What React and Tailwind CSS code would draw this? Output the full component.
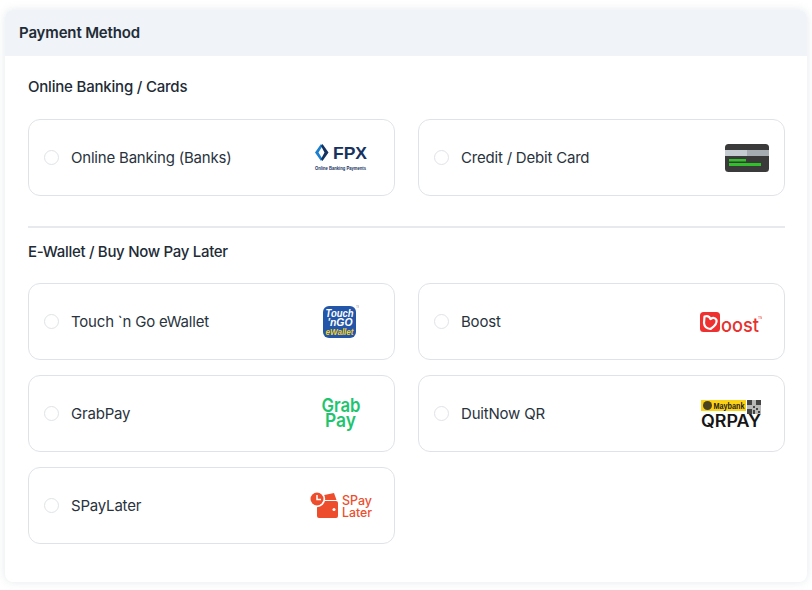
const FpxLogo = () => (
  <svg width="56" height="32" viewBox="0 0 56 32">
    <path d="M8 2 L2 10.5 L8 19 L9.5 17 L5.5 10.5 L9.5 4 Z" fill="#1b7fd0" />
    <path d="M9.5 2 L15.5 10.5 L9.5 19 L8 17 L11.5 10.5 L8 4 Z" fill="#16325f" />
    <text x="20" y="17" fontFamily="Liberation Sans, sans-serif" fontWeight="700" fontSize="17" fill="#16325f" textLength="34" lengthAdjust="spacingAndGlyphs">FPX</text>
    <text x="2" y="28" fontFamily="Liberation Sans, sans-serif" fontWeight="700" fontSize="5" fill="#16325f" textLength="51" lengthAdjust="spacingAndGlyphs">Online Banking Payments</text>
  </svg>
);

const CardLogo = () => (
  <svg width="46" height="32" viewBox="0 0 46 32" className="ml-[32px] shrink-0">
    <rect x="1" y="2" width="44" height="28" rx="3.5" fill="#3a3a3a" />
    <rect x="1" y="8" width="22" height="6" fill="#c4ccd2" />
    <rect x="23" y="8" width="22" height="6" fill="#a5adb3" />
    <rect x="5" y="17" width="17" height="2.5" fill="#2fc02a" />
    <rect x="5" y="21" width="32" height="3" fill="#2fc02a" />
  </svg>
);

const TngLogo = () => (
  <svg width="36" height="36" viewBox="0 0 36 36">
    <rect x="0" y="2" width="33" height="32" rx="6" fill="#2355a8" />
    <text x="16.5" y="13" textAnchor="middle" fontFamily="Liberation Sans, sans-serif" fontStyle="italic" fontWeight="700" fontSize="11" fill="#fff" textLength="28" lengthAdjust="spacingAndGlyphs">Touch</text>
    <text x="17" y="21.5" textAnchor="middle" fontFamily="Liberation Sans, sans-serif" fontStyle="italic" fontWeight="700" fontSize="10" fill="#fff" textLength="25" lengthAdjust="spacingAndGlyphs">'nGO</text>
    <text x="16.5" y="31" textAnchor="middle" fontFamily="Liberation Sans, sans-serif" fontStyle="italic" fontWeight="700" fontSize="9.5" fill="#f5d327" textLength="28" lengthAdjust="spacingAndGlyphs">eWallet</text>
    <text x="33" y="4" fontFamily="Liberation Sans, sans-serif" fontSize="3" fill="#9aa4b0">TM</text>
  </svg>
);

const BoostLogo = () => (
  <svg width="62" height="26" viewBox="0 0 62 26">
    <rect x="0" y="3" width="20" height="20" rx="3.5" fill="#ee3030" />
    <path d="M4.5 7.5 Q9 6 10.5 10 Q14.5 7.5 16.5 11 Q17.5 15.5 10.5 20 Q4.5 19.5 4 14 Z" fill="#ee3030" stroke="#fff" strokeWidth="2.2" strokeLinejoin="round" />
    <text x="21" y="22.5" fontFamily="Inter, sans-serif" fontSize="20" fontWeight="500" fill="#e8302e" textLength="38" lengthAdjust="spacingAndGlyphs">oost</text>
    <text x="58" y="10" fontFamily="Liberation Sans, sans-serif" fontSize="3.5" fill="#e8302e">TM</text>
  </svg>
);

const GrabLogo = () => (
  <svg width="42" height="36" viewBox="0 0 42 36">
    <text x="1.5" y="16" fontFamily="Inter, sans-serif" fontWeight="600" fontSize="19" fill="#1fc46f" textLength="39" lengthAdjust="spacingAndGlyphs">Grab</text>
    <text x="5" y="30.5" fontFamily="Inter, sans-serif" fontWeight="600" fontSize="19" fill="#1fc46f" textLength="31" lengthAdjust="spacingAndGlyphs">Pay</text>
  </svg>
);

const QrPayLogo = () => (
  <svg width="60" height="32" viewBox="0 0 60 32">
    <rect x="0" y="2" width="45" height="11" fill="#fbd116" />
    <circle cx="6.5" cy="7.5" r="4.5" fill="#4b4220" />
    <text x="12.5" y="11" fontFamily="Liberation Sans, sans-serif" fontWeight="700" fontSize="9.5" fill="#1b1b1b" textLength="31" lengthAdjust="spacingAndGlyphs">Maybank</text>
    <rect x="46" y="2" width="14" height="14" fill="#b8b8b8" />
    <path d="M46 2h5v5h-5z M55 2h5v5h-5z M46 11h5v5h-5z M52 8h2v2h-2z M55 10h2v2h-2z M52 12h2v4h-2z M57 13h2v2h-2z" fill="#444" />
    <text x="0" y="29" fontFamily="Inter, sans-serif" fontWeight="600" fontSize="17" fill="#151515" textLength="60" lengthAdjust="spacingAndGlyphs">QRPAY</text>
  </svg>
);

const SpayLaterLogo = () => (
  <svg width="64" height="32" viewBox="0 0 64 32">
    <path d="M13 5.5 L25 3 L27.5 10 H13 Z" fill="#ee4d2d" />
    <rect x="8" y="11" width="21" height="17" rx="2" fill="#ee4d2d" />
    <circle cx="8" cy="9" r="8.2" fill="#fff" />
    <circle cx="8" cy="9" r="6.5" fill="#ee4d2d" />
    <path d="M8 5 V9.5 H12" fill="none" stroke="#fff" strokeWidth="1.5" />
    <circle cx="25" cy="19.5" r="1.5" fill="#fff" />
    <text x="33" y="15" fontFamily="Inter, sans-serif" fontWeight="500" fontSize="12.5" fill="#ee4d2d" textLength="30" lengthAdjust="spacingAndGlyphs">SPay</text>
    <text x="33" y="27" fontFamily="Inter, sans-serif" fontWeight="500" fontSize="12.5" fill="#ee4d2d" textLength="30" lengthAdjust="spacingAndGlyphs">Later</text>
  </svg>
);

const Option = ({ label, logo }) => {
  return (
    <label className="flex h-[77px] items-center rounded-xl border border-[#dfe3e8] bg-white pr-[21px] pl-[15px]">
      <span className="h-[15px] w-[15px] shrink-0 rounded-full border border-[#dfe3e8]" />
      <span className="ml-[12px] flex-1 pt-[1px] text-[15px] tracking-[-0.2px] text-[#29333d]">{label}</span>
      <span className="flex w-[64px] justify-center">{logo}</span>
    </label>
  );
};

export default function App() {
  return (
    <div className="h-[590px] bg-white px-[5px] pt-[10px] font-['Inter',sans-serif]">
      <div className="h-[572px] overflow-hidden rounded-lg bg-white shadow-[0_0_8px_rgba(145,158,171,0.24)]">
        <div className="flex h-[46px] items-center bg-[#f0f3f7] px-[14px] text-[15px] font-semibold tracking-[-0.15px] text-[#212b36]">
          Payment Method
        </div>
        <div className="pr-[22px] pl-[23px]">
          {/* online banking section */}
          <h3 className="mt-[21px] text-[15px] leading-5 font-medium tracking-[-0.2px] text-[#212b36]">
            Online Banking / Cards
          </h3>
          <div className="mt-[22px] grid grid-cols-2 gap-x-[23px] gap-y-[15px]">
            <Option label="Online Banking (Banks)" logo={<FpxLogo />} />
            <Option label="Credit / Debit Card" logo={<CardLogo />} />
          </div>

          <hr className="mt-[30px] border-t-2 border-[#e6e9ed]" />

          {/* e-wallet section */}
          <h3 className="mt-[14px] text-[15px] leading-5 font-medium tracking-[-0.3px] text-[#212b36]">
            E-Wallet / Buy Now Pay Later
          </h3>
          <div className="mt-[21px] grid grid-cols-2 gap-x-[23px] gap-y-[15px]">
            <Option label="Touch `n Go eWallet" logo={<TngLogo />} />
            <Option label="Boost" logo={<BoostLogo />} />
            <Option label="GrabPay" logo={<GrabLogo />} />
            <Option label="DuitNow QR" logo={<QrPayLogo />} />
            <Option label="SPayLater" logo={<SpayLaterLogo />} />
          </div>
        </div>
      </div>
    </div>
  );
}
